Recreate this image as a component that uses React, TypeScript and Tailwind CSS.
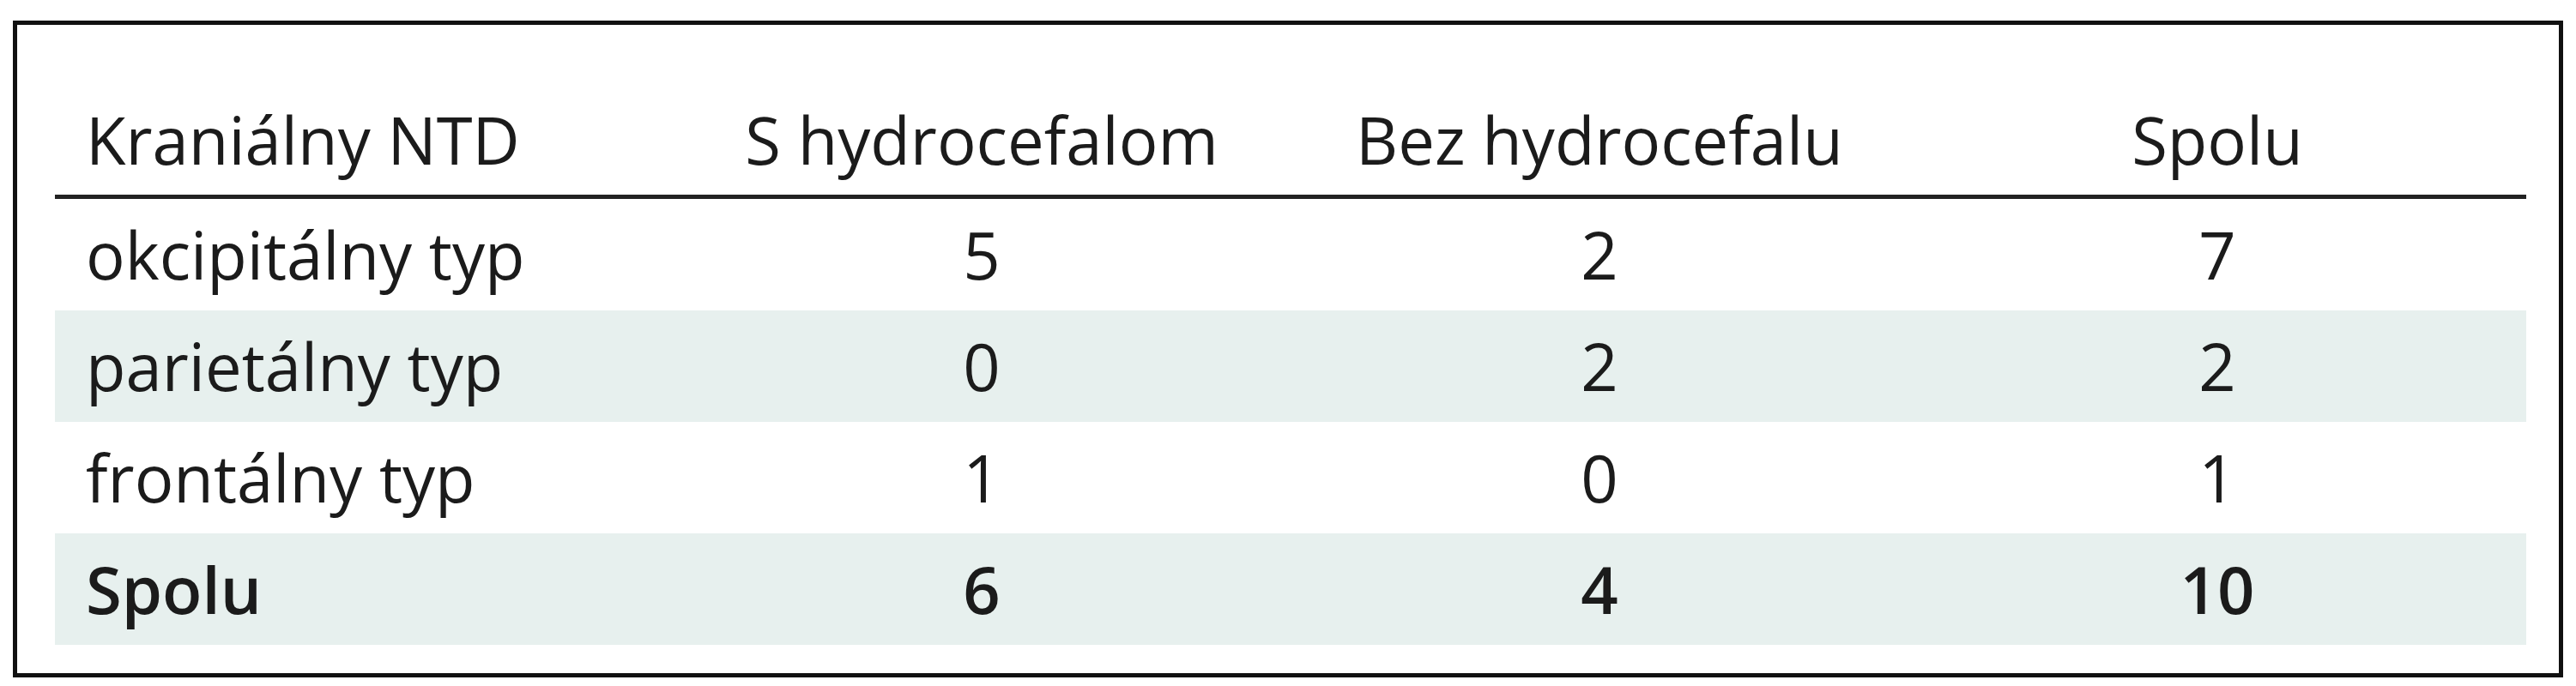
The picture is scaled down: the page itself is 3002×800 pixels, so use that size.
const header = ['Kraniálny NTD', 'S hydrocefalom', 'Bez hydrocefalu', 'Spolu'];

const rows = [
  { label: 'okcipitálny typ', values: ['5', '2', '7'], shaded: false, bold: false },
  { label: 'parietálny typ', values: ['0', '2', '2'], shaded: true, bold: false },
  { label: 'frontálny typ', values: ['1', '0', '1'], shaded: false, bold: false },
  { label: 'Spolu', values: ['6', '4', '10'], shaded: true, bold: true },
];

export default function App() {
  return (
    <div className="w-[3002px] h-[800px] bg-white pt-[24px] pl-[15px] text-[#1b1b1b] text-[76px] font-['Open_Sans',sans-serif]">
      <div className="w-[2972px] h-[766px] border-[5px] border-[#111111] pl-[44px] pr-[38px] flex flex-col">
        {/* header */}
        <div className="grid grid-cols-4 h-[203px] items-end border-b-[5px] border-[#222222] pb-[26px] leading-none">
          {header.map((h, i) => (
            <div key={h} className={i === 0 ? 'pl-[36px]' : 'text-center'}>
              {h}
            </div>
          ))}
        </div>
        {rows.map((row) => (
          <div
            key={row.label}
            className={`grid grid-cols-4 h-[130px] leading-[130px] ${row.shaded ? 'bg-[#e7f0ee]' : 'bg-white'} ${row.bold ? 'font-semibold' : ''}`}
          >
            <div className="pl-[36px]">{row.label}</div>
            {row.values.map((v, i) => (
              <div key={i} className="text-center">
                {v}
              </div>
            ))}
          </div>
        ))}
      </div>
    </div>
  );
}
